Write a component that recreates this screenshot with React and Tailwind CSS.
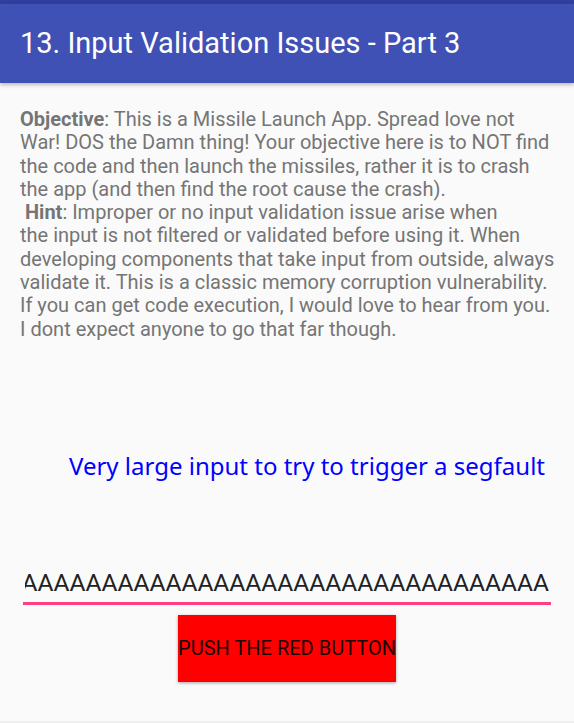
import React from "react";

const bodyLines = [
  [<b key="o" className="font-bold">Objective</b>, ": This is a Missile Launch App. Spread love not"],
  ["War! DOS the Damn thing! Your objective here is to NOT find"],
  ["the code and then launch the missiles, rather it is to crash"],
  ["the app (and then find the root cause the crash)."],
  ["\u00a0", <b key="h" className="font-bold">Hint</b>, ": Improper or no input validation issue arise when"],
  ["the input is not filtered or validated before using it. When"],
  ["developing components that take input from outside, always"],
  ["validate it. This is a classic memory corruption vulnerability."],
  ["If you can get code execution, I would love to hear from you."],
  ["I dont expect anyone to go that far though."],
];

export default function App() {
  const filler = "A".repeat(60);

  return (
    <div className="h-[723px] w-[574px] bg-[#fafafa] flex flex-col overflow-hidden font-['Roboto',sans-serif]">
      {/* Status bar + toolbar */}
      <div className="h-[4px] bg-[#303f9f]" />
      <div className="h-[79px] bg-[#3f51b5] flex items-center px-[20px] shadow-[0_2px_4px_rgba(0,0,0,0.25)] z-10">
        <h1 className="text-white text-[29px] leading-none">
          13. Input Validation Issues - Part 3
        </h1>
      </div>

      {/* Description */}
      <div className="px-[20px] pt-[25px] text-[#757575] text-[20px] leading-[23.3px] whitespace-nowrap">
        {bodyLines.map((line, i) => (
          <div key={i}>{line}</div>
        ))}
      </div>

      {/* Hint label */}
      <div className="mt-[110px] pr-[29px] text-right text-[#0000ff] text-[24px] leading-[30px] font-['Noto_Sans',sans-serif]">
        Very large input to try to trigger a segfault
      </div>

      {/* Input */}
      <div className="mt-[87px] mx-[23px] flex flex-col">
        <div className="px-[2px] h-[34px]">
          <div className="h-[30px] overflow-hidden flex justify-end">
            <span className="text-[#212121] text-[24.5px] leading-[30px] whitespace-nowrap">
              {filler}
            </span>
          </div>
        </div>
        <div className="h-[3px] bg-[#ff4081]" />
      </div>

      {/* Button */}
      <div className="flex justify-center mt-[10px]">
        <button className="w-[218px] h-[67px] bg-[#ff0000] text-[#1a0000] text-[20px] leading-none whitespace-nowrap flex items-center justify-center shadow-[0_1px_3px_rgba(0,0,0,0.35)]">
          PUSH THE RED BUTTON
        </button>
      </div>

      <div className="flex-1" />
      <div className="h-[2px] bg-[#eeeeee]" />
    </div>
  );
}
